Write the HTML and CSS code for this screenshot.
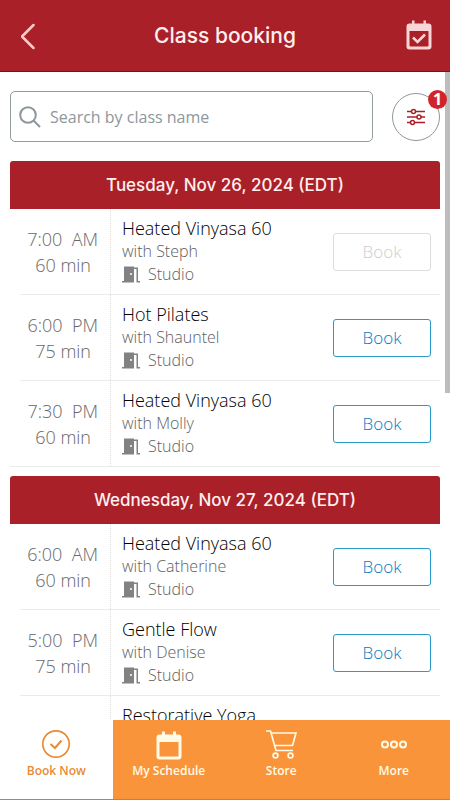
FILE: index.html
```html
<!DOCTYPE html>
<html lang="en">
<head>
<meta charset="utf-8">
<meta name="viewport" content="width=device-width, initial-scale=1">
<title>Class booking</title>
<link rel="stylesheet" href="styles.css">
</head>
<body>
<svg class="symbols" aria-hidden="true">
  <symbol id="door" viewBox="0 0 18 17">
    <path d="M2 0.500H12V1.500H16V15H18V16.500H14.500V3H12V16.500H0V15H2Z" fill="currentColor"/>
    <circle cx="9" cy="8" r="1" fill="#fff"/>
  </symbol>
</svg>
<header class="topbar">
  <button class="icon-button" aria-label="Back">
    <svg width="20" height="28" viewBox="0 0 20 28" fill="none" stroke="#fbc9cc" stroke-width="2.500" stroke-linecap="round" stroke-linejoin="round"><path d="M12 3L0.500 14.500L12 26" transform="translate(0.500 0)"/></svg>
  </button>
  <h1 class="title">Class booking</h1>
  <button class="icon-button" aria-label="My calendar">
    <svg width="26" height="32" viewBox="0 0 26 32"><path fill="#f9d5d7" fill-rule="evenodd" d="M6 0.500h2.500v3h9V0.500H20v3h2.500A3 3 0 0 1 25.500 6.500v20a3 3 0 0 1-3 3h-19a3 3 0 0 1-3-3V6.500a3 3 0 0 1 3-3H6ZM3.500 11v14.500q0 1 1 1h17q1 0 1-1v-14.500Z"/><path d="M7 17.500l4.500 4.500 7.500-7.500" fill="none" stroke="#f9d5d7" stroke-width="2.500"/></svg>
  </button>
</header>
<main class="content">
  <div class="scrollbar"></div>
  <div class="search-row">
    <label class="search">
      <svg width="22" height="22" viewBox="0 0 22 22" fill="none" stroke="#8d979c" stroke-width="2"><circle cx="9" cy="9" r="7.800"/><path d="M14.500 14.500L21 21"/></svg>
      <input type="search" placeholder="Search by class name" aria-label="Search by class name">
    </label>
    <button class="filter" aria-label="Filters, 1 active">
      <svg width="20" height="18" viewBox="0 0 20 18" fill="none" stroke="#ab2028" stroke-width="1.500"><path d="M1 3.500H19M1 9H19M1 14.500H19"/><g fill="#fff"><circle cx="7.500" cy="3.500" r="2"/><circle cx="13" cy="9" r="2"/><circle cx="6.500" cy="14.500" r="2"/></g></svg>
      <span class="badge">1</span>
    </button>
  </div>

  <section class="day">
    <h2 class="date">Tuesday, Nov 26, 2024 (EDT)</h2>
    <ul class="classes">
      <li class="class"><div class="time"><span>7:00 &nbsp;AM</span><span>60 min</span></div><div class="info"><h3 class="name">Heated Vinyasa 60</h3><p class="teacher">with Steph</p><p class="room"><svg class="door"><use href="#door"/></svg>Studio</p></div><button class="book" disabled>Book</button></li>
      <li class="class"><div class="time"><span>6:00 &nbsp;PM</span><span>75 min</span></div><div class="info"><h3 class="name">Hot Pilates</h3><p class="teacher">with Shauntel</p><p class="room"><svg class="door"><use href="#door"/></svg>Studio</p></div><button class="book">Book</button></li>
      <li class="class"><div class="time"><span>7:30 &nbsp;PM</span><span>60 min</span></div><div class="info"><h3 class="name">Heated Vinyasa 60</h3><p class="teacher">with Molly</p><p class="room"><svg class="door"><use href="#door"/></svg>Studio</p></div><button class="book">Book</button></li>
    </ul>
  </section>

  <section class="day">
    <h2 class="date">Wednesday, Nov 27, 2024 (EDT)</h2>
    <ul class="classes">
      <li class="class"><div class="time"><span>6:00 &nbsp;AM</span><span>60 min</span></div><div class="info"><h3 class="name">Heated Vinyasa 60</h3><p class="teacher">with Catherine</p><p class="room"><svg class="door"><use href="#door"/></svg>Studio</p></div><button class="book">Book</button></li>
      <li class="class"><div class="time"><span>5:00 &nbsp;PM</span><span>75 min</span></div><div class="info"><h3 class="name">Gentle Flow</h3><p class="teacher">with Denise</p><p class="room"><svg class="door"><use href="#door"/></svg>Studio</p></div><button class="book">Book</button></li>
      <li class="class"><div class="time"></div><div class="info"><h3 class="name">Restorative Yoga</h3></div></li>
    </ul>
  </section>
</main>
<nav class="tabs">
  <a class="tab active" href="#book" aria-current="page">
    <svg width="32" height="32" viewBox="0 0 32 32" fill="none" stroke="currentColor" stroke-width="1.700"><circle cx="16" cy="16" r="13.200"/><path d="M10.500 16l4.500 4 6.500-7.500" stroke-width="2"/></svg>
    Book Now
  </a>
  <a class="tab" href="#schedule">
    <svg width="32" height="32" viewBox="0 0 32 32"><path fill="currentColor" fill-rule="evenodd" d="M9 3.500h3v3h8V3.500h3v3h2.500a3 3 0 0 1 3 3v19a3 3 0 0 1-3 3h-19a3 3 0 0 1-3-3V9.500a3 3 0 0 1 3-3H9ZM6.500 14v14.500h19v-14.500Z"/></svg>
    My Schedule
  </a>
  <a class="tab" href="#store">
    <svg width="32" height="32" viewBox="0 0 32 32" fill="none" stroke="currentColor" stroke-width="1.700"><path d="M1 3H5.500L11 22.500H28M6.500 5H31L27.500 17.500H9.500"/><circle cx="10.500" cy="27.500" r="2.400"/><circle cx="25.500" cy="27.500" r="2.400"/></svg>
    Store
  </a>
  <a class="tab" href="#more">
    <svg width="32" height="32" viewBox="0 0 32 32" fill="none" stroke="currentColor" stroke-width="2"><circle cx="7" cy="16.500" r="3"/><circle cx="16" cy="16.500" r="3"/><circle cx="25" cy="16.500" r="3"/></svg>
    More
  </a>
</nav>
</body>
</html>
```
FILE: styles.css
```css
* { box-sizing: border-box; }
body {
  margin: 0;
  height: 100vh;
  display: flex;
  flex-direction: column;
  background: #fff;
  color: #000;
  font-family: "Open Sans", "Noto Sans", sans-serif;
}
h1, h2, h3, p, ul { margin: 0; padding: 0; }
ul { list-style: none; }
button { font: inherit; cursor: pointer; }
.symbols { display: none; }

.topbar {
  flex: none;
  height: 72px;
  padding: 0 16px;
  display: flex;
  align-items: center;
  justify-content: space-between;
  background: #a92028;
  border-bottom: 1px solid #8d0a12;
}
.icon-button {
  width: 30px;
  height: 48px;
  padding: 0;
  display: flex;
  align-items: center;
  justify-content: center;
  background: none;
  border: 0;
}
.title {
  color: #ffeeee;
  font: 500 21px/28px Inter, sans-serif;
}

.content {
  position: relative;
  flex: 1;
  min-height: 0;
  padding: 19px 10px 0;
  overflow: hidden;
}
.scrollbar {
  position: absolute;
  top: 0;
  right: 0;
  width: 5px;
  height: 321px;
  background: #bdbdbd;
}
.search-row {
  display: flex;
  align-items: center;
  gap: 19px;
  margin-bottom: 19px;
}
.search {
  flex: 1;
  height: 51px;
  padding: 0 8px;
  display: flex;
  align-items: center;
  gap: 9px;
  border: 1px solid #939da0;
  border-radius: 5px;
}
.search svg { flex: none; }
.search input {
  flex: 1;
  min-width: 0;
  padding: 0;
  border: 0;
  outline: 0;
  background: none;
  font: 16px/24px "Open Sans", sans-serif;
}
.search input::placeholder { color: #8d979c; opacity: 1; }
.filter {
  position: relative;
  flex: none;
  width: 48px;
  height: 48px;
  padding: 0;
  display: flex;
  align-items: center;
  justify-content: center;
  background: #fff;
  border: 1px solid #8f999c;
  border-radius: 50%;
}
.badge {
  position: absolute;
  top: -4px;
  right: -8px;
  width: 19px;
  height: 19px;
  border-radius: 50%;
  background: #d2232b;
  color: #fff;
  font: 700 16px/19px "Noto Sans", sans-serif;
  text-align: center;
}

.day { margin-bottom: 9px; }
.date {
  height: 48px;
  border-radius: 3px 3px 0 0;
  background: #a92028;
  color: #ffeeee;
  font: 500 17px/48px Inter, sans-serif;
  text-align: center;
}
.class {
  height: 86px;
  margin-left: 10px;
  padding-right: 9px;
  display: flex;
  align-items: center;
  border-bottom: 1px solid #ebebeb;
}
.class:last-child { margin-left: 0; padding-left: 10px; }
.time {
  align-self: stretch;
  width: 91px;
  padding: 1px 12px 0 0;
  display: flex;
  flex-direction: column;
  justify-content: center;
  align-items: flex-end;
  border-right: 1px dotted #dedede;
  color: #686868;
  font-size: 18px;
  font-weight: 300;
  line-height: 26px;
}
.time span:last-child { padding-right: 7px; }
.info {
  flex: 1;
  align-self: stretch;
  padding: 8px 0 0 11px;
}
.name { font-size: 18px; font-weight: 300; line-height: 23px; }
.teacher, .room {
  color: #606060;
  font-size: 16px;
  font-weight: 300;
  line-height: 23px;
}
.room { display: flex; align-items: center; gap: 8px; }
.door { width: 18px; height: 17px; color: #828282; }
.book {
  width: 98px;
  height: 38px;
  padding: 0;
  background: #fff;
  border: 1px solid #2799ca;
  border-radius: 3px;
  color: #007cc2;
  font-size: 17px;
  font-weight: 300;
}
.book:disabled { color: #cdcdcd; border-color: #ddd; cursor: default; }

.tabs {
  flex: none;
  height: 80px;
  display: flex;
  background: #f9943a;
  border-bottom: 1px solid #d87a28;
}
.tab {
  flex: 1;
  padding-top: 8px;
  display: flex;
  flex-direction: column;
  align-items: center;
  gap: 2px;
  color: #fffbe6;
  font: 600 12px/18px "Open Sans", sans-serif;
  text-decoration: none;
}
.tab.active { background: #fff; color: #e78c35; }
```
